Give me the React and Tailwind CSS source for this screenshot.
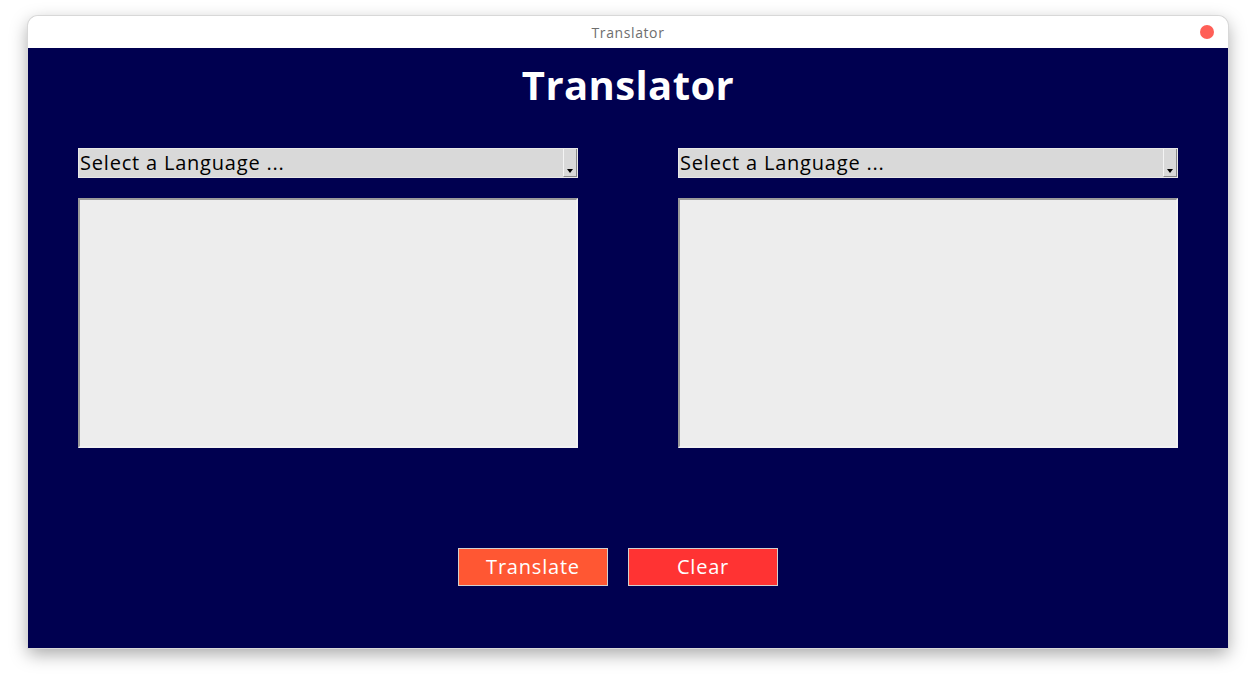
export default function App() {
  const font = { fontFamily: '"Open Sans", "Liberation Sans", sans-serif' }

  const Picker = () => (
    <div className="flex h-[30px] w-[500px] items-stretch border border-[#e8e8e8] bg-[#d9d9d9]">
      <span className="flex-1 pl-[1px] text-[20px] leading-[27px] tracking-[0.8px] text-black">Select a Language ...</span>
      <div className="relative w-[14px] border-l border-l-[#f4f4f4] border-r border-r-[#8a8a8a] border-b border-b-[#8a8a8a] bg-[#d9d9d9]">
        <div className="absolute bottom-[3px] left-[3px] h-0 w-0 border-l-[3.5px] border-r-[3.5px] border-t-[4px] border-l-transparent border-r-transparent border-t-black" />
      </div>
    </div>
  )

  const Box = () => (
    <div className="h-[250px] w-[500px] border-[2px] border-t-[#9a9a9a] border-l-[#9a9a9a] border-b-[#f2f2f2] border-r-[#f2f2f2] bg-[#ededed]" />
  )

  return (
    <div className="h-[688px] w-[1256px] bg-white pt-[16px] pl-[28px]" style={font}>
      <div className="w-[1200px] overflow-hidden rounded-t-[10px] shadow-[0_6px_18px_rgba(0,0,0,0.35)] ring-1 ring-[#d8d8d8]">
        <div className="relative flex h-[32px] items-center justify-center bg-white">
          <span className="text-[14px] tracking-[0.6px] text-[#6e6e6e]">Translator</span>
          <div className="absolute right-[14px] top-[9px] h-[14px] w-[14px] rounded-full bg-[#ff5f57]" />
        </div>
        <div className="flex h-[600px] flex-col items-center bg-[#000050]">
          <h1 className="mt-[11px] text-[40px] font-bold leading-[52px] tracking-[0.4px] text-white">Translator</h1>
          <div className="mt-[37px] flex gap-[100px]">
            <div className="flex flex-col gap-[20px]">
              <Picker />
              <Box />
            </div>
            <div className="flex flex-col gap-[20px]">
              <Picker />
              <Box />
            </div>
          </div>
          <div className="mt-[100px] mr-[20px] flex gap-[20px]">
            <button className="h-[38px] w-[150px] border border-[#d0d0d0] bg-[#ff5733] text-[20px] tracking-[0.8px] text-white">Translate</button>
            <button className="h-[38px] w-[150px] border border-[#d0d0d0] bg-[#ff3333] text-[20px] tracking-[0.8px] text-white">Clear</button>
          </div>
        </div>
      </div>
    </div>
  )
}
